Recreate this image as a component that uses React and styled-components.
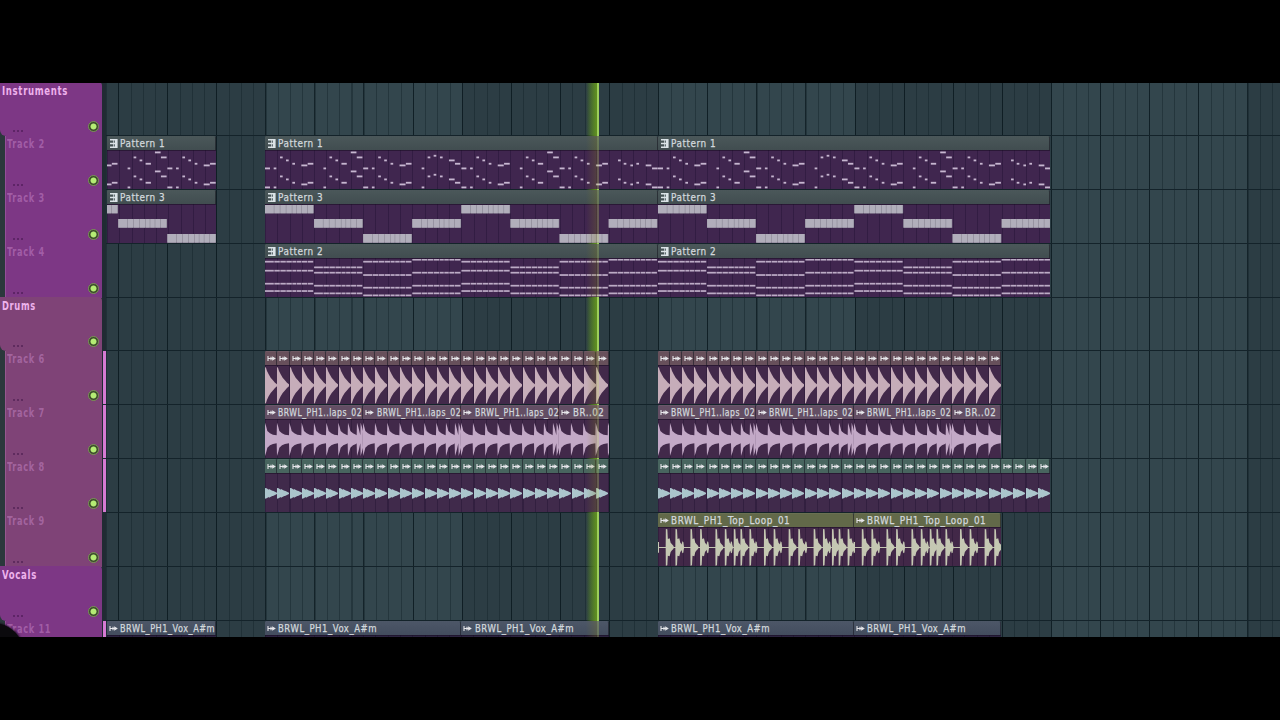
import { useLayoutEffect, useRef } from "react";
import styled, { createGlobalStyle, css } from "styled-components";

const BEAT = 12.275;
const BAR = BEAT * 4;

const GlobalStyle = createGlobalStyle`
  * {
    box-sizing: border-box;
  }

  body {
    margin: 0;
    background: #000;
    overflow: hidden;
    font-family: "DejaVu Sans Condensed", "DejaVu Sans", sans-serif;
  }
`;

const Screen = styled.main`
  display: flex;
  width: 1280px;
  height: 720px;
  padding: 83px 0;
  background: #000;
`;

const Playlist = styled.section`
  position: relative;
  display: flex;
  flex: 1;
  overflow: hidden;
  background: #1d2b31;
`;

/* ---------- track headers ---------- */

const TrackList = styled.div`
  display: flex;
  flex-direction: column;
  flex: none;
  width: 102px;
  background: #2b383c;
`;

const TrackHead = styled.div`
  position: relative;
  flex: none;
  height: ${({ $height }) => $height}px;
  margin-left: 5px;
  padding: 1px 0 0 1px;
  background: ${({ $color }) => $color};
  border-left: 1px solid rgba(220, 150, 215, 0.25);
  ${({ $group, $height }) =>
    $group &&
    css`
      height: ${$height + 1}px;
      margin: -1px 0 0;
      padding: 2px 0 0 2px;
      border-left: none;
      border-radius: 0 4px 0 6px;
    `}
`;

const TrackName = styled.div`
  height: 14px;
  line-height: 14px;
  font-size: ${({ $group }) => ($group ? 12.5 : 12)}px;
  font-weight: 700;
  letter-spacing: 0.9px;
  color: ${({ $group }) => ($group ? "#eeb2ec" : "rgba(215, 150, 215, 0.42)")};
`;

const Dots = styled.div`
  position: absolute;
  left: ${({ $group }) => ($group ? 13 : 7)}px;
  bottom: 4px;
  width: 11px;
  height: 2px;
  background: repeating-linear-gradient(
    90deg,
    rgba(50, 10, 60, 0.42) 0 2px,
    transparent 2px 4px
  );
`;

const Led = styled.div`
  position: absolute;
  right: 3px;
  bottom: 4px;
  width: 11px;
  height: 11px;
  border-radius: 50%;
  border: 1px solid #74964f;
  background: radial-gradient(circle, #b4ec74 0 2.6px, #3c4a2c 3.4px);
`;

const MeterColumn = styled.div`
  display: flex;
  flex-direction: column;
  flex: none;
  width: 4px;
  padding-left: 1px;
  background: #202b33;
`;

const Meter = styled.div`
  flex: none;
  height: ${({ $height }) => $height}px;
  border-bottom: 1px solid #202b33;
  background: ${({ $on }) => ($on ? "#d67ad3" : "transparent")};
`;

/* ---------- timeline ---------- */

const Timeline = styled.div`
  position: relative;
  display: flex;
  flex-direction: column;
  flex: 1;
  margin-left: -0.4px;
  overflow: hidden;
  background: repeating-linear-gradient(
      90deg,
      rgba(10, 24, 30, 0.75) 0 1px,
      transparent 1px ${BAR}px
    )
    ${BEAT}px 0,
    repeating-linear-gradient(
      90deg,
      rgba(16, 32, 38, 0.42) 0 1px,
      transparent 1px ${BEAT}px
    ),
    repeating-linear-gradient(
      90deg,
      #2c3d44 0 ${BAR * 4}px,
      #33464d ${BAR * 4}px ${BAR * 8}px
    )
    ${-3 * BEAT}px 0;
  background-size: 1400px 100%;
  background-repeat: no-repeat;
`;

const Lane = styled.div`
  flex: none;
  display: grid;
  grid-template-columns: repeat(96, ${BEAT}px);
  height: ${({ $height }) => $height}px;
  border-bottom: 1px solid #14232a;
`;

const ClipBox = styled.div`
  position: relative;
  z-index: 1;
  grid-row: 1;
  grid-column: ${({ $start }) => $start + 1} / span ${({ $beats }) => $beats};
  min-width: 0;
  overflow: hidden;
  display: flex;
  flex-direction: column;
  ${({ $start }) =>
    $start === 0 &&
    css`
      margin-left: 1px;

      ${() => ClipBody} svg {
        margin-left: -1px;
      }
    `}
`;

const ClipHeader = styled.div`
  flex: none;
  display: flex;
  align-items: center;
  height: 14px;
  padding-left: 2px;
  border-right: 1px solid rgba(20, 20, 30, 0.55);
  background: ${({ $color }) => $color};
  border-top: 1px solid rgba(255, 255, 255, 0.05);
  border-radius: 1px 2px 0 0;

  svg {
    flex: none;
  }
`;

const ClipTitle = styled.div`
  margin-left: 2.4px;
  height: 14px;
  line-height: 13px;
  font-size: 10.5px;
  letter-spacing: 0.6px;
  color: #d2d8dc;
  -webkit-text-stroke: 0.25px;
`;

const ClipBody = styled.div`
  position: relative;
  flex: 1;
  min-height: 0;
  overflow: hidden;
  border-top: 1px solid rgba(20, 10, 30, 0.5);
  background: repeating-linear-gradient(
      90deg,
      rgba(15, 5, 35, 0.28) 0 1px,
      transparent 1px ${BEAT}px
    ),
    ${({ $color }) => $color};

  svg {
    display: block;
    margin-top: ${({ $lift }) => ($lift ? -1 : 0)}px;
  }
`;

const Fitted = styled.span`
  display: inline-block;
  white-space: nowrap;
  transform-origin: 0 50%;
`;

const Playhead = styled.div`
  position: absolute;
  top: 0;
  bottom: 0;
  left: 586px;
  width: 13px;
  z-index: ${({ $over }) => ($over ? 2 : 0)};
  opacity: ${({ $over }) => ($over ? 0.28 : 1)};
  background: ${({ $over }) =>
    $over
      ? "linear-gradient(90deg, rgba(120, 120, 20, 0), #86801f 11px, #c8e060 11px 13px)"
      : "linear-gradient(90deg, rgba(70, 130, 30, 0), #4f9022 10px, #4f9022 11px, #8cc95a 11px 13px)"};
`;

const CameraEdge = styled.div`
  position: absolute;
  left: -38px;
  bottom: -48px;
  width: 62px;
  height: 62px;
  border-radius: 50%;
  background: #0b0a0d;
  box-shadow: 0 0 2px 1px rgba(20, 10, 25, 0.7);
`;

/* squeezes the label horizontally to the given width */
const FitText = ({ width, children }) => {
  const ref = useRef(null);

  useLayoutEffect(() => {
    const el = ref.current;
    el.style.transform = `scaleX(${width / el.offsetWidth})`;
  }, [width, children]);

  return <Fitted ref={ref}>{children}</Fitted>;
};

const PatternIcon = () => (
  <svg width="9" height="9" viewBox="0 0 9 9">
    <path d="M1 0H8.6V9H1V7.6H4.2V5.3H1V3.8H4.2V1.4H1Z" fill="#dbe3e7" />
    <path d="M5.4 1.4V3.8M5.4 5.3V7.6" stroke="#59666a" strokeWidth="1.1" />
  </svg>
);

const AudioIcon = () => (
  <svg width="9" height="7" viewBox="0 0 9 7">
    <path d="M1 1v5M1 3.5h6M4 1.8v3.4" stroke="#e6e6ea" strokeWidth="1.1" />
    <path d="M5.2 1.2L8.8 3.5L5.2 5.8z" fill="#e6e6ea" />
  </svg>
);

/* ---------- note drawings, 3 units per pixel ---------- */

const BAR_U = 147.3;

const octaves = (notes) =>
  notes.flatMap(([x, w, y]) => [
    [x, w, y],
    [x, w, y + 57],
  ]);

const riffA = octaves([
  [0, 15, 55],
  [26, 8, 55],
  [45, 8, 22],
  [63, 8, 31],
  [82, 8, 41],
  [109, 18, 46],
  [128, 17, 41],
]);
const riffB = octaves([
  [28, 8, 55],
  [46, 8, 22],
  [64, 8, 31],
  [82, 16, 41],
  [110, 17, 7],
  [128, 17, 22],
]);
const riffC = octaves([
  [28, 8, 55],
  [46, 8, 22],
  [64, 8, 17],
  [83, 8, 22],
  [110, 17, 31],
  [128, 16, 41],
]);
const riffD = octaves([
  [28, 8, 31],
  [45, 8, 41],
  [65, 8, 46],
  [83, 8, 41],
  [111, 17, 46],
  [130, 17, 55],
]);
const RIFFS = [riffA, riffB, riffA, riffC, riffA, riffB, riffA, riffD];

const STEPS = [0, 28, 46, 64, 82, 96, 111, 128];
const BASS = [2, 45, 90, 45];
const CHORDS = [
  [11, 38, 77, 99],
  [28, 44, 83, 106],
  [11, 51, 89, 112],
  [5, 44, 83, 106],
];

const stepWidth = (i) => (i === 7 ? BAR_U - 1 : STEPS[i + 1]) - STEPS[i] - 1.6;

const notesFor = (kind) => {
  const out = [];
  for (let bar = 0; bar < 8; bar++) {
    const x0 = bar * BAR_U;
    if (kind === "melody") {
      RIFFS[bar].forEach(([x, w, y]) => out.push([x0 + x, y - 2.5, w, 5.5]));
    }
    if (kind === "bass") {
      STEPS.forEach((x, i) =>
        out.push([x0 + x, BASS[bar % 4], stepWidth(i), 26])
      );
    }
    if (kind === "chords") {
      CHORDS[bar % 4].forEach((y) =>
        STEPS.forEach((x, i) => out.push([x0 + x, y - 2.5, stepWidth(i), 5.2]))
      );
    }
  }
  return out;
};

const NOTE_COLORS = { melody: "#c6b6d0", bass: "#b1aebb", chords: "#bcabc5" };

const Notes = ({ kind, offset, beats }) => (
  <svg
    width={beats * BEAT}
    height="39"
    viewBox={`${offset * BEAT * 3} 0 ${beats * BEAT * 3} 117`}
  >
    {kind === "bass" &&
      Array.from({ length: 8 }, (_, bar) => (
        <rect
          key={bar}
          x={bar * BAR_U}
          y={BASS[bar % 4]}
          width={BAR_U - 1}
          height="26"
          fill="#85808f"
        />
      ))}
    {notesFor(kind).map(([x, y, w, h], i) => (
      <rect key={i} x={x} y={y} width={w} height={h} fill={NOTE_COLORS[kind]} />
    ))}
  </svg>
);

/* ---------- waveforms, mirrored around the centre line ---------- */

const mirror = (points) => {
  const top = points.map(([x, a]) => `${x} ${58 - a}`);
  const bottom = [...points].reverse().map(([x, a]) => `${x} ${58 + a}`);
  return `M${[...top, ...bottom].join("L")}Z`;
};

const shift = (points, dx) => points.map(([x, a]) => [x + dx, a]);

const KICK = [
  [0, 55],
  [3, 53],
  [6, 43],
  [11, 33],
  [17, 23],
  [23, 16],
  [30, 8],
  [36, 3],
];
const HAT = [
  [0, 16],
  [5, 15],
  [11, 11],
  [12, 13],
  [22, 8],
  [24, 8],
  [36, 2],
];
const CLAP_HITS = [0, 36, 73, 110, 147, 184, 220, 249, 276, 287];
const LOOP_HITS = [24, 53, 98, 127, 173, 201, 228, 248, 275];
const LOOP_GHOSTS = [74, 149, 220, 294];

const clapWave = () =>
  CLAP_HITS.flatMap((x, i) => {
    const end = CLAP_HITS[i + 1] ?? 294.6;
    const hit = [
      [x, 50],
      [x + 4, 37],
      [x + 7, 25],
    ];
    if (end - x > 20) hit.push([x + 15, 18], [x + 24, 14]);
    hit.push([end - 1, 12]);
    return hit;
  });

const Wave = ({ kind, beats, color }) => {
  const paths = [];
  if (kind === "kick") paths.push(mirror(KICK));
  if (kind === "hat") paths.push(mirror(HAT));
  if (kind === "clap") paths.push(mirror(clapWave()));
  if (kind === "loop") {
    [0, 294.6].forEach((x0) => {
      LOOP_HITS.forEach((x) =>
        paths.push(
          mirror(
            shift(
              [
                [-1, 0],
                [-0.5, 55],
                [4, 54],
                [5.5, 25],
                [11, 27],
                [14, 14],
                [18, 9],
                [22, 5],
                [24, 0],
              ],
              x0 + x
            )
          )
        )
      );
      LOOP_GHOSTS.forEach((x) =>
        paths.push(
          mirror(
            shift(
              [
                [-4, 4],
                [-1, 18],
                [2, 16],
                [4, 2],
              ],
              x0 + x
            )
          )
        )
      );
    });
    paths.push("M0 57H590V60H0ZM0 42H3V74H0Z");
  }
  return (
    <svg
      width={beats * BEAT}
      height="39"
      viewBox={`0 0 ${beats * BEAT * 3} 117`}
      fill={color}
    >
      {paths.map((d, i) => (
        <path key={i} d={d} />
      ))}
    </svg>
  );
};

const PATTERN_HEADER = "linear-gradient(#4a5759, #414d50)";
const PURPLE = "#40264f";

const STYLES = {
  kick: { header: "#67505b", body: "#42294a", wave: "#c6adb9" },
  clap: { header: "#634e64", body: "#42294a", wave: "#c3a9c7" },
  hat: { header: "#48655f", body: "#402a4b", wave: "#abc5cc" },
  loop: { header: "#626949", body: "#422848", wave: "#c5c8b3" },
  vox: { header: "linear-gradient(#4c5667, #434d5e)", body: "#2c2340" },
};

const Clip = ({ kind, start, beats, title, titleWidth, offset = 0 }) => {
  const audio = STYLES[kind];

  return (
    <ClipBox $start={start} $beats={beats}>
      <ClipHeader $color={audio ? audio.header : PATTERN_HEADER}>
        {audio ? <AudioIcon /> : <PatternIcon />}
        {title && (
          <ClipTitle>
            <FitText width={titleWidth}>{title}</FitText>
          </ClipTitle>
        )}
      </ClipHeader>
      <ClipBody $color={audio ? audio.body : PURPLE} $lift={!audio}>
        {audio ? (
          kind !== "vox" && (
            <Wave kind={kind} beats={beats} color={audio.wave} />
          )
        ) : (
          <Notes kind={kind} offset={offset} beats={beats} />
        )}
      </ClipBody>
    </ClipBox>
  );
};

const pattern = (kind, title, start, beats, offset) => ({
  kind,
  title,
  titleWidth: 45,
  start,
  beats,
  offset,
});

const hits = (kind, start, count) =>
  Array.from({ length: count }, (_, i) => ({ kind, start: start + i, beats: 1 }));

const claps = (start) => [
  ...[0, 8, 16].map((beat) => ({
    kind: "clap",
    title: "BRWL_PH1..laps_02",
    titleWidth: 84,
    start: start + beat,
    beats: 8,
  })),
  { kind: "clap", title: "BR..02", titleWidth: 31, start: start + 24, beats: 4 },
];

const sample = (kind, title, titleWidth, start, beats) => ({
  kind,
  title,
  titleWidth,
  start,
  beats,
});

const TOP_LOOP = "BRWL_PH1_Top_Loop_01";
const VOX = "BRWL_PH1_Vox_A#m";

const VIOLET = "#7d3785";
const PLUM = "#7f4377";

const TRACKS = [
  { name: "Instruments", width: 66, group: true, color: VIOLET, height: 53 },
  {
    name: "Track 2",
    color: VIOLET,
    height: 54,
    clips: [
      pattern("melody", "Pattern 1", 0, 9, 3),
      pattern("melody", "Pattern 1", 13, 32),
      pattern("melody", "Pattern 1", 45, 32),
    ],
  },
  {
    name: "Track 3",
    color: VIOLET,
    height: 54,
    clips: [
      pattern("bass", "Pattern 3", 0, 9, 3),
      pattern("bass", "Pattern 3", 13, 32),
      pattern("bass", "Pattern 3", 45, 32),
    ],
  },
  {
    name: "Track 4",
    color: VIOLET,
    height: 54,
    clips: [
      pattern("chords", "Pattern 2", 13, 32),
      pattern("chords", "Pattern 2", 45, 32),
    ],
  },
  { name: "Drums", width: 34, group: true, color: PLUM, height: 53 },
  {
    name: "Track 6",
    color: PLUM,
    height: 54,
    meter: true,
    clips: [...hits("kick", 13, 28), ...hits("kick", 45, 28)],
  },
  {
    name: "Track 7",
    color: PLUM,
    height: 54,
    meter: true,
    clips: [...claps(13), ...claps(45)],
  },
  {
    name: "Track 8",
    color: PLUM,
    height: 54,
    meter: true,
    clips: [...hits("hat", 13, 28), ...hits("hat", 45, 32)],
  },
  {
    name: "Track 9",
    color: PLUM,
    height: 54,
    clips: [
      sample("loop", TOP_LOOP, 119, 45, 16),
      sample("loop", TOP_LOOP, 119, 61, 12),
    ],
  },
  { name: "Vocals", width: 35, group: true, color: VIOLET, height: 54 },
  {
    name: "Track 11",
    width: 44,
    color: VIOLET,
    height: 54,
    meter: true,
    clips: [
      sample("vox", VOX, 95, 0, 9),
      sample("vox", VOX, 99, 13, 16),
      sample("vox", VOX, 99, 29, 12),
      sample("vox", VOX, 99, 45, 16),
      sample("vox", VOX, 99, 61, 12),
    ],
  },
];

const App = () => {
  return (
    <>
      <GlobalStyle />
      <Screen>
        <Playlist>
          <TrackList>
            {TRACKS.map(({ name, width = 38, group, color, height }) => (
              <TrackHead
                key={name}
                $group={group}
                $color={color}
                $height={height}
              >
                <TrackName $group={group}>
                  <FitText width={width}>{name}</FitText>
                </TrackName>
                <Dots $group={group} />
                <Led />
              </TrackHead>
            ))}
          </TrackList>

          <MeterColumn>
            {TRACKS.map(({ name, meter, height }) => (
              <Meter key={name} $on={meter} $height={height} />
            ))}
          </MeterColumn>

          <Timeline>
            {TRACKS.map(({ name, height, clips = [] }) => (
              <Lane key={name} $height={height}>
                {clips.map((clip) => (
                  <Clip key={clip.start} {...clip} />
                ))}
              </Lane>
            ))}
          </Timeline>

          <Playhead />
          <Playhead $over />
          <CameraEdge />
        </Playlist>
      </Screen>
    </>
  );
};

export default App;
